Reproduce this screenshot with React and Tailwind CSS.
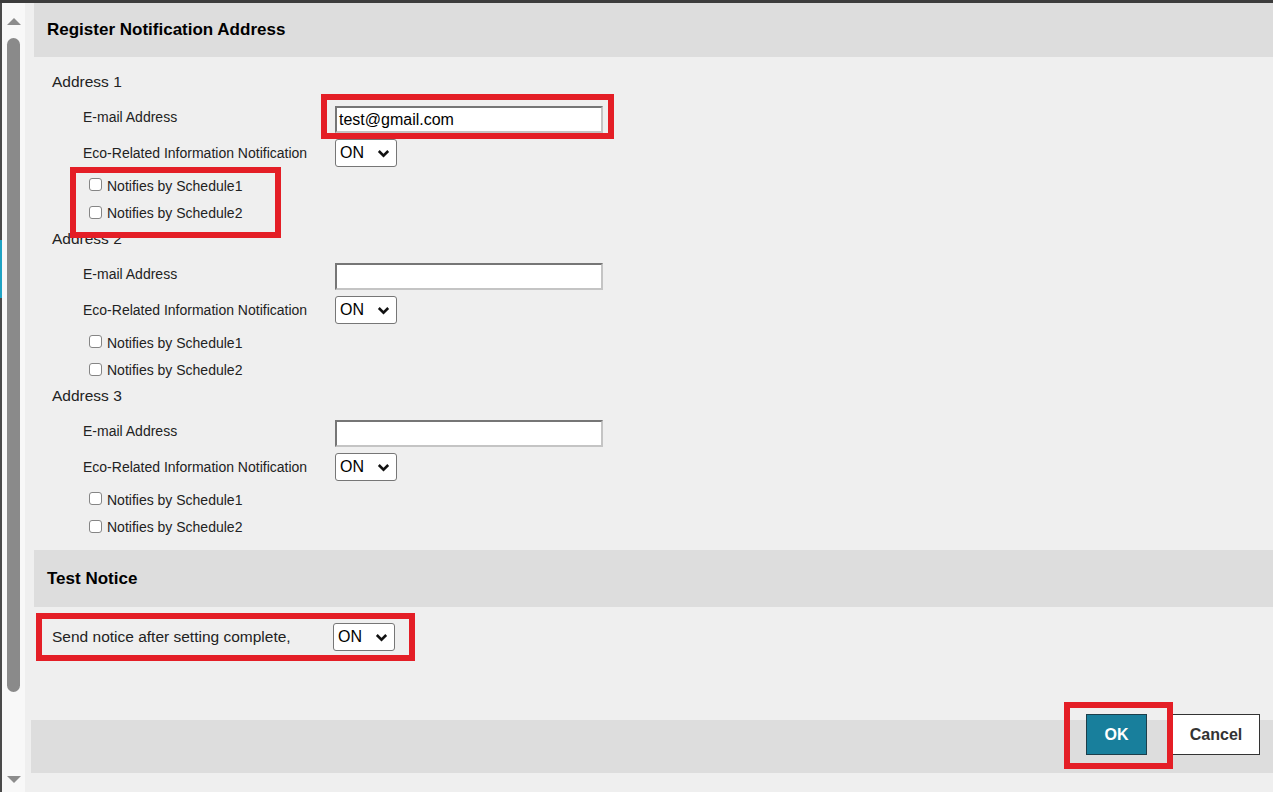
import React from "react";

function Chevron() {
  return (
    <svg width="13" height="9" viewBox="0 0 13 9">
      <path d="M1.8 2 L6.5 6.6 L11.2 2" fill="none" stroke="#111" strokeWidth="2.6" />
    </svg>
  );
}

function OnSelect() {
  return (
    <div className="relative w-[62px] h-[28px] bg-white border border-[#767676] rounded-[3px] flex items-center">
      <span className="pl-[4px] text-[16px] text-black leading-none">ON</span>
      <span className="absolute right-[6px] top-[9px] flex">
        <Chevron />
      </span>
    </div>
  );
}

function Check({ label }) {
  return (
    <div className="flex items-center h-full pl-[64px] pt-[1px]">
      <span className="w-[13px] h-[13px] bg-white border border-[#858585] rounded-[3px] -mt-[3px]" />
      <span className="ml-[5px] text-[14px] text-[#222]">{label}</span>
    </div>
  );
}

function AddressBlock({ n, email }) {
  return (
    <div className="flex flex-col pb-[1px]">
      <div className="h-[20px] leading-[20px] text-[15.5px] pl-[27px] pt-[1px] text-[#222]">Address {n}</div>
      <div className="mt-[15px] h-[27px] flex items-center pl-[58px]">
        <span className="w-[252px] text-[14px] text-[#222] -mt-[4px]">E-mail Address</span>
        <div className="w-[268px] h-[27px] bg-white border-2 border-t-[#767676] border-l-[#767676] border-r-[#c4c4c4] border-b-[#c4c4c4] flex items-center pl-[2px] text-[16px] text-black">
          {email}
        </div>
      </div>
      <div className="mt-[6px] h-[28px] flex items-center pl-[58px]">
        <span className="w-[252px] text-[14px] text-[#222]">Eco-Related Information Notification</span>
        <OnSelect />
      </div>
      <div className="mt-[5px] h-[27px]">
        <Check label="Notifies by Schedule1" />
      </div>
      <div className="h-[28px]">
        <Check label="Notifies by Schedule2" />
      </div>
    </div>
  );
}

export default function App() {
  return (
    <div
      className="relative w-[1273px] h-[792px] overflow-hidden bg-[#efefef] flex flex-col"
      style={{ fontFamily: '"Liberation Sans", Arial, sans-serif' }}
    >
      <div className="h-[3px] bg-[#3c3c3c] shrink-0" />
      <div className="flex flex-1 min-h-0">
        {/* left edge strip */}
        <div className="w-[2px] bg-[#4a4a4a] flex flex-col">
          <div className="h-[237px]" />
          <div className="h-[58px] bg-[#1fa3c4]" />
        </div>
        {/* scrollbar */}
        <div className="w-[23px] bg-[#f8f8f8] flex flex-col items-center">
          <div className="mt-[15px] w-0 h-0 border-l-[7px] border-r-[7px] border-b-[7px] border-l-transparent border-r-transparent border-b-[#8c8c8c]" />
          <div className="mt-[13px] w-[13px] h-[654px] rounded-full bg-[#8a8a8a]" />
          <div className="mt-[84px] w-0 h-0 border-l-[7px] border-r-[7px] border-t-[7px] border-l-transparent border-r-transparent border-t-[#8c8c8c]" />
        </div>
        {/* content */}
        <div className="flex-1 flex flex-col">
          <div className="ml-[9px] h-[54px] bg-[#dddddd] flex items-center pl-[13px] text-[17px] font-bold text-black">
            Register Notification Address
          </div>
          <div className="mt-[14px]">
            <AddressBlock n={1} email="test@gmail.com" />
            <AddressBlock n={2} email="" />
            <AddressBlock n={3} email="" />
          </div>
          <div className="mt-[8px] ml-[9px] h-[57px] bg-[#dddddd] flex items-center pl-[13px] text-[17px] font-bold text-black">
            Test Notice
          </div>
          <div className="mt-[16px] h-[28px] flex items-center pl-[27px]">
            <span className="w-[281px] text-[15.5px] text-[#222]">Send notice after setting complete,</span>
            <OnSelect />
          </div>
          <div className="mt-[69px] ml-[6px] h-[53px] bg-[#dddddd] flex justify-end items-start pr-[13px]">
            <button className="-mt-[6px] w-[61px] h-[41px] bg-[#187f9c] border border-[#1d3e4a] text-white font-bold text-[16px]">
              OK
            </button>
            <button className="-mt-[6px] ml-[25px] w-[88px] h-[41px] bg-white border border-[#333] text-[#333] font-bold text-[16px]">
              Cancel
            </button>
          </div>
        </div>
      </div>

      {/* red annotation boxes */}
      <div className="absolute left-[321px] top-[94px] w-[293px] h-[45px] border-[6px] border-[#e41e26]" />
      <div className="absolute left-[70px] top-[167px] w-[211px] h-[71px] border-[6px] border-[#e41e26]" />
      <div className="absolute left-[36px] top-[613px] w-[379px] h-[48px] border-[6px] border-[#e41e26]" />
      <div className="absolute left-[1064px] top-[702px] w-[109px] h-[67px] border-[6px] border-[#e41e26]" />
    </div>
  );
}
